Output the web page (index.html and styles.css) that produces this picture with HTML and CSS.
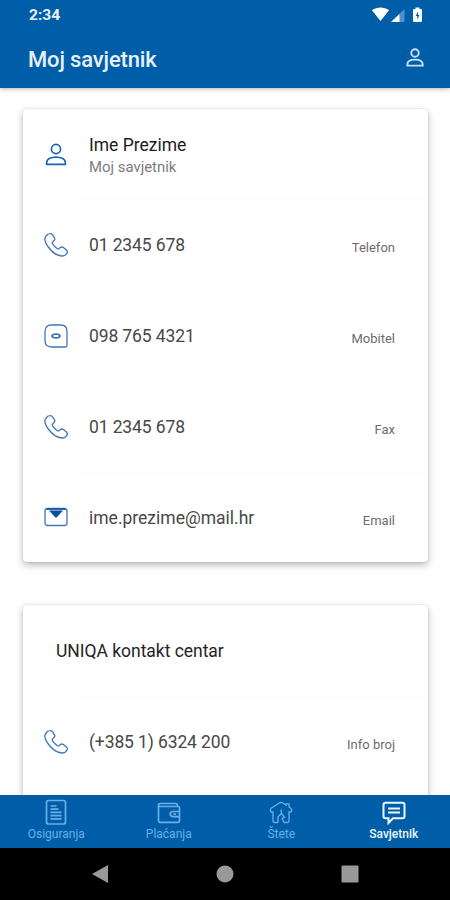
FILE: index.html
```html
<!DOCTYPE html>
<html lang="hr">
<head>
<meta charset="utf-8">
<title>Moj savjetnik</title>
<link rel="stylesheet" href="styles.css">
</head>
<body>
<svg class="defs" aria-hidden="true">
  <symbol id="person" viewBox="0 0 24 24"><circle cx="12" cy="6" r="5"/><path d="M1.800 22.800v-1.800c0-4 4.500-6.200 10.200-6.200s10.200 2.200 10.200 6.200v1.800z"/></symbol>
  <symbol id="phone" viewBox="0 0 24 24"><path d="M3 2 1.500 3.800C.2 5.800 1.200 9.700 4.300 14c3.400 4.700 9 8.800 13.700 9 2.300.1 4.200-1.300 5.200-3.300.5-1 .2-1.700-.6-2.400l-3.200-2.700c-1-.8-2-.8-3 0l-1.300 1c-.7.500-1.300.4-2-.1-1.800-1.300-3.300-2.900-4.500-4.700-.5-.7-.5-1.300.1-1.900l1.400-1.400c.8-.8.9-1.700.4-2.700L8.600 1.800C7.900.8 6.900.5 5.700.7 4.600.8 3.700 1.200 3 2z"/></symbol>
</svg>
<div class="screen">
  <header class="header">
    <div class="status">
      <span class="time">2:34</span>
      <svg class="status-icons" viewBox="0 0 54 18"><path class="lit" d="M2 4.300C7 .6 14 .6 19 4.300L10.500 15z"/><path class="dim" d="M34.500 3v13H21z"/><path class="lit" d="M29.500 8v8H21z"/><path class="lit" d="M45.500 1.500h4V3h1.200q1.300 0 1.300 1.300v10.400q0 1.300-1.300 1.300h-6.400q-1.300 0-1.300-1.300V4.300Q43 3 44.300 3h1.200z"/><path class="bolt" d="M48 5.500 45.700 10h1.600v3.500L49.500 9H48z"/></svg>
    </div>
    <div class="titlebar">
      <h1>Moj savjetnik</h1>
      <svg class="profile"><use href="#person"/></svg>
    </div>
  </header>
  <main class="content">
    <section class="card">
      <div class="row first"><svg class="icon person"><use href="#person"/></svg><div class="name"><b>Ime Prezime</b><small>Moj savjetnik</small></div></div>
      <div class="row"><svg class="icon"><use href="#phone"/></svg><span class="value number">01 2345 678</span><span class="label">Telefon</span></div>
      <div class="row"><svg class="icon" viewBox="0 0 24 24"><path d="M7.500 1h9Q23 1 23 7.500V21.500Q23 23 21.500 23H7.500Q1 23 1 16.500v-9Q1 1 7.500 1z"/><ellipse class="slot" cx="12" cy="12" rx="4" ry="1.900"/></svg><span class="value number">098 765 4321</span><span class="label">Mobitel</span></div>
      <div class="row"><svg class="icon"><use href="#phone"/></svg><span class="value number">01 2345 678</span><span class="label">Fax</span></div>
      <div class="row last"><svg class="icon" viewBox="0 0 24 24"><rect x="1" y="3.500" width="22" height="17" rx="2.500"/><path class="solid" d="M5 5.500h14L12 13z"/><path class="flap" d="M2.500 4h19"/></svg><span class="value">ime.prezime@mail.hr</span><span class="label">Email</span></div>
    </section>
    <section class="card second">
      <h2>UNIQA kontakt centar</h2>
      <div class="row"><svg class="icon"><use href="#phone"/></svg><span class="value number">(+385 1) 6324 200</span><span class="label">Info broj</span></div>
    </section>
  </main>
  <nav class="tabs">
    <a class="tab"><svg viewBox="0 0 24 26"><rect x="2.500" y="1.500" width="19" height="23.500" rx="2"/><path d="M6.500 7h6M6.500 10.200h8M6.500 13.400h11M6.500 16.600h11M6.500 19.800h11"/></svg><span>Osiguranja</span></a>
    <a class="tab"><svg viewBox="0 0 24 26"><path d="M1.500 6v15.500q0 1.800 1.800 1.800h17.500q1.700 0 1.700-1.800V9q0-1.500-1.500-1.500H3.500Q1.500 7.500 1.500 6t2-1.500h15q2 0 2 2.500"/><path d="M22.500 12.500h-6q-3.300 0-3.300 2.600t3.300 2.600h6M16.500 15.100h2.500"/></svg><span>Plaćanja</span></a>
    <a class="tab claims"><svg viewBox="0 0 24 26"><path d="M9 23.500H5.500q-1.500 0-1.500-1.500V13H2q-1.500-2.500.5-4L10.300 4q1.700-1 3.400 0L17 6V4.800h3V8l1.500 1q2 1.500.5 4h-2v9q0 1.500-1.500 1.500H15"/><path d="m12 10.500.5 4-3.500 3.300v5.700m3.500-9 3 3.800-2.500 1 2 4.200"/></svg><span>Štete</span></a>
    <a class="tab active"><svg viewBox="0 0 24 26"><path d="M3.500 3.800h17q2 0 2 2v11.500q0 2-2 2H11L6.500 24v-4.700h-3q-2 0-2-2V5.800q0-2 2-2zM6 9.500h12M6 13.500h12"/></svg><span>Savjetnik</span></a>
  </nav>
  <footer class="system">
    <svg viewBox="0 0 18 18"><path d="M17 0v18L1 9z"/></svg>
    <svg viewBox="0 0 18 18"><circle cx="9" cy="9" r="8.500"/></svg>
    <svg viewBox="0 0 18 18"><rect x=".5" y=".5" width="17" height="17" rx="1"/></svg>
  </footer>
</div>
</body>
</html>
```
FILE: styles.css
```css
* { box-sizing: border-box; }
body { margin: 0; font-family: Roboto, sans-serif; background: #fff; }
.defs { position: absolute; width: 0; height: 0; }
svg { display: block; fill: none; flex: none; }
.screen { width: 450px; height: 900px; display: flex; flex-direction: column; overflow: hidden; }
.header { height: 88px; flex: none; position: relative; z-index: 1; background: #005ea8; color: #e6f1fd; box-shadow: 0 1px 4px rgba(0,0,0,.3); }
.status { height: 30px; display: flex; justify-content: space-between; align-items: center; padding: 0 26px 0 29px; }
.time { font-size: 15.5px; font-weight: 700; line-height: 30px; }
.status-icons { width: 54px; height: 18px; margin-top: -1px; }
.lit { fill: #fff; }
.dim { fill: #4c91c8; }
.bolt { fill: #005ea8; }
.titlebar { height: 58px; display: flex; justify-content: space-between; align-items: center; padding: 0 26px 0 28px; }
h1 { margin: 0; font-size: 22px; font-weight: 500; letter-spacing: -.15px; }
.profile { width: 18px; height: 19px; margin-top: -3px; stroke: #c9e0f8; stroke-width: 2.5; overflow: visible; }
.content { flex: 1; min-height: 0; overflow: hidden; padding: 21px 22px 0 23px; background: #fefefe; }
.card { background: #fff; border-radius: 4px; box-shadow: 0 3px 7px rgba(0,0,0,.27), 0 0 2px rgba(0,0,0,.12); }
.second { margin-top: 43px; height: 273px; }
.row { height: 91px; display: flex; align-items: center; padding: 0 33px 0 21px; }
.first { height: 90px; }
.last { height: 90px; }
.row + .row::before, h2 + .row::before { content: ""; align-self: flex-start; width: 347px; height: 1px; margin-right: -347px; background: #fafcfc; transform: translateX(37px); }
.icon { width: 24px; height: 24px; stroke: #4374b8; stroke-width: 1.300; margin-right: 21px; }
.person { stroke: #1865ac; stroke-width: 1.800; width: 22px; height: 23px; margin-left: 1px; margin-right: 22px; }
.slot { stroke-width: 1.700; }
.solid { fill: #064e9c; stroke: none; }
.flap { stroke: #1659a4; stroke-width: 1.800; }
.name { display: flex; flex-direction: column; padding-top: 4px; }
.name b { font-size: 17.500px; line-height: 22px; font-weight: 400; color: #1c1c1c; }
.name small { font-size: 14.900px; line-height: 22px; color: #7c7c7c; }
.value { font-size: 17.500px; color: #484848; }
.number { letter-spacing: -.12px; }
.label { margin: 5px 0 0 auto; font-size: 13px; color: #6c6c6c; }
.last .value { padding-top: 2px; }
.last .label { margin-top: 7px; }
h2 { margin: 0; height: 91px; padding-left: 33px; line-height: 93px; font-size: 17.500px; font-weight: 400; letter-spacing: -.03px; color: #242424; }
.tabs { height: 53px; flex: none; display: flex; background: #005ea8; color: #6caee8; }
.tab { flex: 1; display: flex; flex-direction: column; align-items: center; padding-top: 4px; font-size: 12px; line-height: 16px; }
.tab svg { width: 24px; height: 26px; stroke: currentColor; stroke-width: 1.700; }
.claims svg { stroke-width: 1.300; }
.tab span { margin-top: 1px; }
.active { color: #eef6ff; font-weight: 500; }
.active svg { stroke-width: 2; }
.system { height: 52px; flex: none; background: #000; display: flex; justify-content: space-between; padding: 17px 91px 0; }
.system svg { width: 18px; height: 18px; fill: #999; }
```
